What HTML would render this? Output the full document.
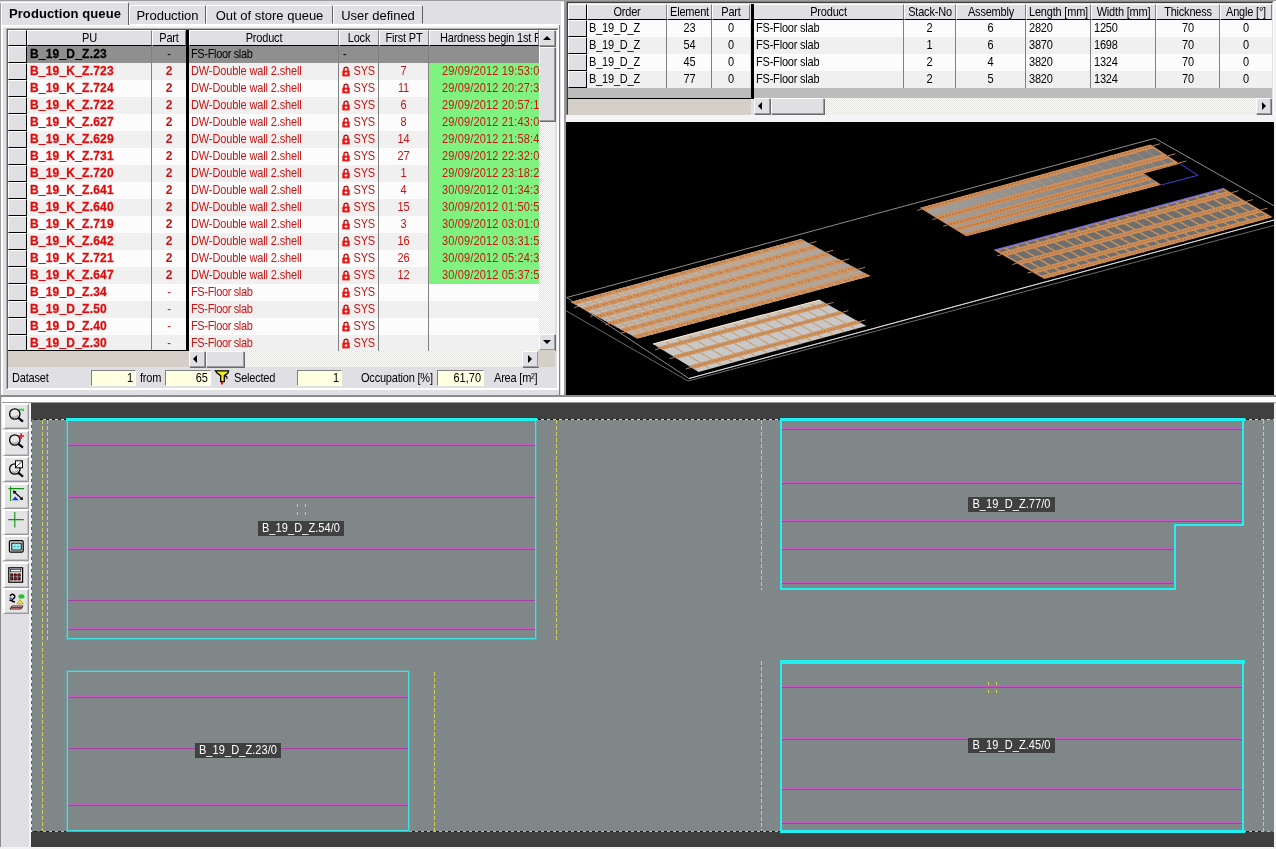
<!DOCTYPE html>
<html><head><meta charset="utf-8"><title>Production queue</title><style>
*{box-sizing:border-box;margin:0;padding:0}
html,body{width:1276px;height:849px;overflow:hidden;background:#e0dfe3;}
body{will-change:transform;position:relative;font-family:"Liberation Sans", sans-serif;font-size:11px;color:#000;line-height:1}
.a{position:absolute}
.t{position:absolute;white-space:nowrap;line-height:17px;height:17px;overflow:hidden;transform:scaleY(1.12);letter-spacing:-.2px}
.s{display:inline-block;transform:scaleY(1.12);letter-spacing:-.2px}
.trk{position:absolute;background-color:#fff;background-image:conic-gradient(#fff 25%,#e2e0dc 0 50%,#fff 0 75%,#e2e0dc 0);background-size:2px 2px}
.r{color:#c81414}
.b{font-weight:bold;font-size:12px;letter-spacing:.2px;-webkit-text-stroke:.25px currentColor}
.c{text-align:center}
.b.r{color:#dc0c0c}
.hd{position:absolute;background:#e0dfe3;border-top:1px solid #fff;border-left:1px solid #fff;border-right:1px solid #808080;border-bottom:1px solid #000;text-align:center;line-height:14px;white-space:nowrap;overflow:hidden;font-size:11px}
.rh{position:absolute;background:#e0dfe3;border-top:1px solid #fff;border-left:1px solid #fff;border-right:1px solid #000;border-bottom:1px solid #000}
.btn{position:absolute;background:#e0dfe3;border:1px solid;border-color:#fff #9a9a9a #9a9a9a #fff;box-shadow:1px 1px 0 #6c6c6c}
.inp{position:absolute;background:#ffffe1;border:1px solid;border-color:#808080 #fff #fff #808080;text-align:right;line-height:14px;padding-right:2px;font-size:11px}
.tab{position:absolute;background:#e0dfe3;border:1px solid;border-color:#fff #606060 transparent #fff;border-radius:2px 2px 0 0;text-align:center;white-space:nowrap;font-size:13px}
.tb{position:absolute;background:#e4e3e6;border:solid;border-width:2px 1px 1px 3px;border-color:#fff #989898 #989898 #fff;box-shadow:inset -1px -1px 0 #c4c4c8}
.lbl{position:absolute;background:#404040;color:#fff;font-size:11px;line-height:15px;height:15px;text-align:center;white-space:nowrap}
</style></head><body>
<div class="a" style="left:0;top:0;width:1276px;height:1px;background:#9d9d9d"></div>
<div class="a" style="left:0;top:24px;width:560px;height:2px;background:#fff"></div>
<div class="a" style="left:2px;top:26px;width:557px;height:2px;background:#f2f2f4"></div>
<div class="a" style="left:0;top:3px;width:1px;height:392px;background:#a0a0a0"></div>
<div class="a" style="left:1px;top:24px;width:2px;height:371px;background:#fff"></div>
<div class="a" style="left:559px;top:25px;width:1px;height:370px;background:#808080"></div>
<div class="a" style="left:561px;top:2px;width:3px;height:393px;background:#fff"></div>
<div class="a" style="left:564px;top:1px;width:2px;height:394px;background:#9d9d9d"></div>
<div class="tab" style="left:1px;top:2px;width:128px;height:23px;line-height:21px;font-weight:bold;font-size:13px;letter-spacing:.1px;border-bottom:none;z-index:2">Production queue</div>
<div class="tab" style="left:129px;top:5px;width:77px;height:19px;line-height:20px">Production</div>
<div class="tab" style="left:206px;top:5px;width:127px;height:19px;line-height:20px">Out of store queue</div>
<div class="tab" style="left:333px;top:5px;width:90px;height:19px;line-height:20px">User defined</div>
<div class="a" style="left:6px;top:28px;width:553px;height:362px;border:1px solid;border-color:#b0b0b0 #fff #fff #b0b0b0"></div>
<div class="a" style="left:7px;top:29px;width:551px;height:360px;border:1px solid;border-color:#606060 #fff #fff #606060;background:#e0dfe3"></div>
<div class="a" style="left:8px;top:30px;width:547px;height:337px;background:#fff"></div>
<div class="rh" style="left:8px;top:30px;width:19px;height:16px"></div>
<div class="hd" style="left:27px;top:30px;width:125px;height:16px;"><span class="s">PU</span></div>
<div class="hd" style="left:152px;top:30px;width:34px;height:16px;"><span class="s">Part</span></div>
<div class="hd" style="left:189px;top:30px;width:150px;height:16px;"><span class="s">Product</span></div>
<div class="hd" style="left:339px;top:30px;width:40px;height:16px;"><span class="s">Lock</span></div>
<div class="hd" style="left:379px;top:30px;width:50px;height:16px;"><span class="s">First PT</span></div>
<div class="hd" style="left:429px;top:30px;width:110px;height:16px;text-align:left;padding-left:10px;"><span class="s">Hardness begin 1st F</span></div>
<div class="a" style="left:186px;top:30px;width:3px;height:321px;background:#000"></div>
<div class="rh" style="left:8px;top:46px;width:19px;height:17px"></div>
<div class="a" style="left:27px;top:46px;width:159px;height:17px;background:#8f8f8f"></div>
<div class="a" style="left:189px;top:46px;width:350px;height:17px;background:#8f8f8f"></div>
<div class="t b " style="left:30px;top:46px;width:121px">B_19_D_Z.23</div>
<div class="t c " style="left:152px;top:46px;width:34px;">-</div>
<div class="t " style="left:191px;top:46px;width:146px;letter-spacing:-.35px">FS-Floor slab</div>
<div class="t " style="left:343px;top:46px;width:30px">-</div>
<div class="rh" style="left:8px;top:63px;width:19px;height:17px"></div>
<div class="a" style="left:27px;top:63px;width:159px;height:17px;background:#f0f0f0"></div>
<div class="a" style="left:189px;top:63px;width:350px;height:17px;background:#f0f0f0"></div>
<div class="a" style="left:429px;top:63px;width:110px;height:17px;background:#7ff27f"></div>
<div class="t b r" style="left:30px;top:63px;width:121px">B_19_K_Z.723</div>
<div class="t c r" style="left:152px;top:63px;width:34px;font-weight:bold;font-size:12px">2</div>
<div class="t r" style="left:191px;top:63px;width:146px;letter-spacing:-.13px">DW-Double wall 2.shell</div>
<div class="t r" style="left:339px;top:63px;width:39px;padding-left:14.5px"><svg class="a" style="left:3px;top:3px;transform:scaleY(.893)" width="8" height="11" viewBox="0 0 8 11"><path d="M2 5V3.2a2 2 0 0 1 4 0V5" fill="none" stroke="#c01010" stroke-width="1.4"/><rect x="0.3" y="4.6" width="7.4" height="5.8" fill="#f01414"/><path d="M4 6v3M2.6 7.5h2.8" stroke="#fff" stroke-width="1"/></svg>SYS</div>
<div class="t c r" style="left:379px;top:63px;width:49px">7</div>
<div class="t r" style="left:442px;top:63px;width:97px;letter-spacing:.15px">29/09/2012 19:53:0</div>
<div class="rh" style="left:8px;top:80px;width:19px;height:17px"></div>
<div class="a" style="left:27px;top:80px;width:159px;height:17px;background:#fcfcfc"></div>
<div class="a" style="left:189px;top:80px;width:350px;height:17px;background:#fcfcfc"></div>
<div class="a" style="left:429px;top:80px;width:110px;height:17px;background:#7ff27f"></div>
<div class="t b r" style="left:30px;top:80px;width:121px">B_19_K_Z.724</div>
<div class="t c r" style="left:152px;top:80px;width:34px;font-weight:bold;font-size:12px">2</div>
<div class="t r" style="left:191px;top:80px;width:146px;letter-spacing:-.13px">DW-Double wall 2.shell</div>
<div class="t r" style="left:339px;top:80px;width:39px;padding-left:14.5px"><svg class="a" style="left:3px;top:3px;transform:scaleY(.893)" width="8" height="11" viewBox="0 0 8 11"><path d="M2 5V3.2a2 2 0 0 1 4 0V5" fill="none" stroke="#c01010" stroke-width="1.4"/><rect x="0.3" y="4.6" width="7.4" height="5.8" fill="#f01414"/><path d="M4 6v3M2.6 7.5h2.8" stroke="#fff" stroke-width="1"/></svg>SYS</div>
<div class="t c r" style="left:379px;top:80px;width:49px">11</div>
<div class="t r" style="left:442px;top:80px;width:97px;letter-spacing:.15px">29/09/2012 20:27:3</div>
<div class="rh" style="left:8px;top:97px;width:19px;height:17px"></div>
<div class="a" style="left:27px;top:97px;width:159px;height:17px;background:#f0f0f0"></div>
<div class="a" style="left:189px;top:97px;width:350px;height:17px;background:#f0f0f0"></div>
<div class="a" style="left:429px;top:97px;width:110px;height:17px;background:#7ff27f"></div>
<div class="t b r" style="left:30px;top:97px;width:121px">B_19_K_Z.722</div>
<div class="t c r" style="left:152px;top:97px;width:34px;font-weight:bold;font-size:12px">2</div>
<div class="t r" style="left:191px;top:97px;width:146px;letter-spacing:-.13px">DW-Double wall 2.shell</div>
<div class="t r" style="left:339px;top:97px;width:39px;padding-left:14.5px"><svg class="a" style="left:3px;top:3px;transform:scaleY(.893)" width="8" height="11" viewBox="0 0 8 11"><path d="M2 5V3.2a2 2 0 0 1 4 0V5" fill="none" stroke="#c01010" stroke-width="1.4"/><rect x="0.3" y="4.6" width="7.4" height="5.8" fill="#f01414"/><path d="M4 6v3M2.6 7.5h2.8" stroke="#fff" stroke-width="1"/></svg>SYS</div>
<div class="t c r" style="left:379px;top:97px;width:49px">6</div>
<div class="t r" style="left:442px;top:97px;width:97px;letter-spacing:.15px">29/09/2012 20:57:1</div>
<div class="rh" style="left:8px;top:114px;width:19px;height:17px"></div>
<div class="a" style="left:27px;top:114px;width:159px;height:17px;background:#fcfcfc"></div>
<div class="a" style="left:189px;top:114px;width:350px;height:17px;background:#fcfcfc"></div>
<div class="a" style="left:429px;top:114px;width:110px;height:17px;background:#7ff27f"></div>
<div class="t b r" style="left:30px;top:114px;width:121px">B_19_K_Z.627</div>
<div class="t c r" style="left:152px;top:114px;width:34px;font-weight:bold;font-size:12px">2</div>
<div class="t r" style="left:191px;top:114px;width:146px;letter-spacing:-.13px">DW-Double wall 2.shell</div>
<div class="t r" style="left:339px;top:114px;width:39px;padding-left:14.5px"><svg class="a" style="left:3px;top:3px;transform:scaleY(.893)" width="8" height="11" viewBox="0 0 8 11"><path d="M2 5V3.2a2 2 0 0 1 4 0V5" fill="none" stroke="#c01010" stroke-width="1.4"/><rect x="0.3" y="4.6" width="7.4" height="5.8" fill="#f01414"/><path d="M4 6v3M2.6 7.5h2.8" stroke="#fff" stroke-width="1"/></svg>SYS</div>
<div class="t c r" style="left:379px;top:114px;width:49px">8</div>
<div class="t r" style="left:442px;top:114px;width:97px;letter-spacing:.15px">29/09/2012 21:43:0</div>
<div class="rh" style="left:8px;top:131px;width:19px;height:17px"></div>
<div class="a" style="left:27px;top:131px;width:159px;height:17px;background:#f0f0f0"></div>
<div class="a" style="left:189px;top:131px;width:350px;height:17px;background:#f0f0f0"></div>
<div class="a" style="left:429px;top:131px;width:110px;height:17px;background:#7ff27f"></div>
<div class="t b r" style="left:30px;top:131px;width:121px">B_19_K_Z.629</div>
<div class="t c r" style="left:152px;top:131px;width:34px;font-weight:bold;font-size:12px">2</div>
<div class="t r" style="left:191px;top:131px;width:146px;letter-spacing:-.13px">DW-Double wall 2.shell</div>
<div class="t r" style="left:339px;top:131px;width:39px;padding-left:14.5px"><svg class="a" style="left:3px;top:3px;transform:scaleY(.893)" width="8" height="11" viewBox="0 0 8 11"><path d="M2 5V3.2a2 2 0 0 1 4 0V5" fill="none" stroke="#c01010" stroke-width="1.4"/><rect x="0.3" y="4.6" width="7.4" height="5.8" fill="#f01414"/><path d="M4 6v3M2.6 7.5h2.8" stroke="#fff" stroke-width="1"/></svg>SYS</div>
<div class="t c r" style="left:379px;top:131px;width:49px">14</div>
<div class="t r" style="left:442px;top:131px;width:97px;letter-spacing:.15px">29/09/2012 21:58:4</div>
<div class="rh" style="left:8px;top:148px;width:19px;height:17px"></div>
<div class="a" style="left:27px;top:148px;width:159px;height:17px;background:#fcfcfc"></div>
<div class="a" style="left:189px;top:148px;width:350px;height:17px;background:#fcfcfc"></div>
<div class="a" style="left:429px;top:148px;width:110px;height:17px;background:#7ff27f"></div>
<div class="t b r" style="left:30px;top:148px;width:121px">B_19_K_Z.731</div>
<div class="t c r" style="left:152px;top:148px;width:34px;font-weight:bold;font-size:12px">2</div>
<div class="t r" style="left:191px;top:148px;width:146px;letter-spacing:-.13px">DW-Double wall 2.shell</div>
<div class="t r" style="left:339px;top:148px;width:39px;padding-left:14.5px"><svg class="a" style="left:3px;top:3px;transform:scaleY(.893)" width="8" height="11" viewBox="0 0 8 11"><path d="M2 5V3.2a2 2 0 0 1 4 0V5" fill="none" stroke="#c01010" stroke-width="1.4"/><rect x="0.3" y="4.6" width="7.4" height="5.8" fill="#f01414"/><path d="M4 6v3M2.6 7.5h2.8" stroke="#fff" stroke-width="1"/></svg>SYS</div>
<div class="t c r" style="left:379px;top:148px;width:49px">27</div>
<div class="t r" style="left:442px;top:148px;width:97px;letter-spacing:.15px">29/09/2012 22:32:0</div>
<div class="rh" style="left:8px;top:165px;width:19px;height:17px"></div>
<div class="a" style="left:27px;top:165px;width:159px;height:17px;background:#f0f0f0"></div>
<div class="a" style="left:189px;top:165px;width:350px;height:17px;background:#f0f0f0"></div>
<div class="a" style="left:429px;top:165px;width:110px;height:17px;background:#7ff27f"></div>
<div class="t b r" style="left:30px;top:165px;width:121px">B_19_K_Z.720</div>
<div class="t c r" style="left:152px;top:165px;width:34px;font-weight:bold;font-size:12px">2</div>
<div class="t r" style="left:191px;top:165px;width:146px;letter-spacing:-.13px">DW-Double wall 2.shell</div>
<div class="t r" style="left:339px;top:165px;width:39px;padding-left:14.5px"><svg class="a" style="left:3px;top:3px;transform:scaleY(.893)" width="8" height="11" viewBox="0 0 8 11"><path d="M2 5V3.2a2 2 0 0 1 4 0V5" fill="none" stroke="#c01010" stroke-width="1.4"/><rect x="0.3" y="4.6" width="7.4" height="5.8" fill="#f01414"/><path d="M4 6v3M2.6 7.5h2.8" stroke="#fff" stroke-width="1"/></svg>SYS</div>
<div class="t c r" style="left:379px;top:165px;width:49px">1</div>
<div class="t r" style="left:442px;top:165px;width:97px;letter-spacing:.15px">29/09/2012 23:18:2</div>
<div class="rh" style="left:8px;top:182px;width:19px;height:17px"></div>
<div class="a" style="left:27px;top:182px;width:159px;height:17px;background:#fcfcfc"></div>
<div class="a" style="left:189px;top:182px;width:350px;height:17px;background:#fcfcfc"></div>
<div class="a" style="left:429px;top:182px;width:110px;height:17px;background:#7ff27f"></div>
<div class="t b r" style="left:30px;top:182px;width:121px">B_19_K_Z.641</div>
<div class="t c r" style="left:152px;top:182px;width:34px;font-weight:bold;font-size:12px">2</div>
<div class="t r" style="left:191px;top:182px;width:146px;letter-spacing:-.13px">DW-Double wall 2.shell</div>
<div class="t r" style="left:339px;top:182px;width:39px;padding-left:14.5px"><svg class="a" style="left:3px;top:3px;transform:scaleY(.893)" width="8" height="11" viewBox="0 0 8 11"><path d="M2 5V3.2a2 2 0 0 1 4 0V5" fill="none" stroke="#c01010" stroke-width="1.4"/><rect x="0.3" y="4.6" width="7.4" height="5.8" fill="#f01414"/><path d="M4 6v3M2.6 7.5h2.8" stroke="#fff" stroke-width="1"/></svg>SYS</div>
<div class="t c r" style="left:379px;top:182px;width:49px">4</div>
<div class="t r" style="left:442px;top:182px;width:97px;letter-spacing:.15px">30/09/2012 01:34:3</div>
<div class="rh" style="left:8px;top:199px;width:19px;height:17px"></div>
<div class="a" style="left:27px;top:199px;width:159px;height:17px;background:#f0f0f0"></div>
<div class="a" style="left:189px;top:199px;width:350px;height:17px;background:#f0f0f0"></div>
<div class="a" style="left:429px;top:199px;width:110px;height:17px;background:#7ff27f"></div>
<div class="t b r" style="left:30px;top:199px;width:121px">B_19_K_Z.640</div>
<div class="t c r" style="left:152px;top:199px;width:34px;font-weight:bold;font-size:12px">2</div>
<div class="t r" style="left:191px;top:199px;width:146px;letter-spacing:-.13px">DW-Double wall 2.shell</div>
<div class="t r" style="left:339px;top:199px;width:39px;padding-left:14.5px"><svg class="a" style="left:3px;top:3px;transform:scaleY(.893)" width="8" height="11" viewBox="0 0 8 11"><path d="M2 5V3.2a2 2 0 0 1 4 0V5" fill="none" stroke="#c01010" stroke-width="1.4"/><rect x="0.3" y="4.6" width="7.4" height="5.8" fill="#f01414"/><path d="M4 6v3M2.6 7.5h2.8" stroke="#fff" stroke-width="1"/></svg>SYS</div>
<div class="t c r" style="left:379px;top:199px;width:49px">15</div>
<div class="t r" style="left:442px;top:199px;width:97px;letter-spacing:.15px">30/09/2012 01:50:5</div>
<div class="rh" style="left:8px;top:216px;width:19px;height:17px"></div>
<div class="a" style="left:27px;top:216px;width:159px;height:17px;background:#fcfcfc"></div>
<div class="a" style="left:189px;top:216px;width:350px;height:17px;background:#fcfcfc"></div>
<div class="a" style="left:429px;top:216px;width:110px;height:17px;background:#7ff27f"></div>
<div class="t b r" style="left:30px;top:216px;width:121px">B_19_K_Z.719</div>
<div class="t c r" style="left:152px;top:216px;width:34px;font-weight:bold;font-size:12px">2</div>
<div class="t r" style="left:191px;top:216px;width:146px;letter-spacing:-.13px">DW-Double wall 2.shell</div>
<div class="t r" style="left:339px;top:216px;width:39px;padding-left:14.5px"><svg class="a" style="left:3px;top:3px;transform:scaleY(.893)" width="8" height="11" viewBox="0 0 8 11"><path d="M2 5V3.2a2 2 0 0 1 4 0V5" fill="none" stroke="#c01010" stroke-width="1.4"/><rect x="0.3" y="4.6" width="7.4" height="5.8" fill="#f01414"/><path d="M4 6v3M2.6 7.5h2.8" stroke="#fff" stroke-width="1"/></svg>SYS</div>
<div class="t c r" style="left:379px;top:216px;width:49px">3</div>
<div class="t r" style="left:442px;top:216px;width:97px;letter-spacing:.15px">30/09/2012 03:01:0</div>
<div class="rh" style="left:8px;top:233px;width:19px;height:17px"></div>
<div class="a" style="left:27px;top:233px;width:159px;height:17px;background:#f0f0f0"></div>
<div class="a" style="left:189px;top:233px;width:350px;height:17px;background:#f0f0f0"></div>
<div class="a" style="left:429px;top:233px;width:110px;height:17px;background:#7ff27f"></div>
<div class="t b r" style="left:30px;top:233px;width:121px">B_19_K_Z.642</div>
<div class="t c r" style="left:152px;top:233px;width:34px;font-weight:bold;font-size:12px">2</div>
<div class="t r" style="left:191px;top:233px;width:146px;letter-spacing:-.13px">DW-Double wall 2.shell</div>
<div class="t r" style="left:339px;top:233px;width:39px;padding-left:14.5px"><svg class="a" style="left:3px;top:3px;transform:scaleY(.893)" width="8" height="11" viewBox="0 0 8 11"><path d="M2 5V3.2a2 2 0 0 1 4 0V5" fill="none" stroke="#c01010" stroke-width="1.4"/><rect x="0.3" y="4.6" width="7.4" height="5.8" fill="#f01414"/><path d="M4 6v3M2.6 7.5h2.8" stroke="#fff" stroke-width="1"/></svg>SYS</div>
<div class="t c r" style="left:379px;top:233px;width:49px">16</div>
<div class="t r" style="left:442px;top:233px;width:97px;letter-spacing:.15px">30/09/2012 03:31:5</div>
<div class="rh" style="left:8px;top:250px;width:19px;height:17px"></div>
<div class="a" style="left:27px;top:250px;width:159px;height:17px;background:#fcfcfc"></div>
<div class="a" style="left:189px;top:250px;width:350px;height:17px;background:#fcfcfc"></div>
<div class="a" style="left:429px;top:250px;width:110px;height:17px;background:#7ff27f"></div>
<div class="t b r" style="left:30px;top:250px;width:121px">B_19_K_Z.721</div>
<div class="t c r" style="left:152px;top:250px;width:34px;font-weight:bold;font-size:12px">2</div>
<div class="t r" style="left:191px;top:250px;width:146px;letter-spacing:-.13px">DW-Double wall 2.shell</div>
<div class="t r" style="left:339px;top:250px;width:39px;padding-left:14.5px"><svg class="a" style="left:3px;top:3px;transform:scaleY(.893)" width="8" height="11" viewBox="0 0 8 11"><path d="M2 5V3.2a2 2 0 0 1 4 0V5" fill="none" stroke="#c01010" stroke-width="1.4"/><rect x="0.3" y="4.6" width="7.4" height="5.8" fill="#f01414"/><path d="M4 6v3M2.6 7.5h2.8" stroke="#fff" stroke-width="1"/></svg>SYS</div>
<div class="t c r" style="left:379px;top:250px;width:49px">26</div>
<div class="t r" style="left:442px;top:250px;width:97px;letter-spacing:.15px">30/09/2012 05:24:3</div>
<div class="rh" style="left:8px;top:267px;width:19px;height:17px"></div>
<div class="a" style="left:27px;top:267px;width:159px;height:17px;background:#f0f0f0"></div>
<div class="a" style="left:189px;top:267px;width:350px;height:17px;background:#f0f0f0"></div>
<div class="a" style="left:429px;top:267px;width:110px;height:17px;background:#7ff27f"></div>
<div class="t b r" style="left:30px;top:267px;width:121px">B_19_K_Z.647</div>
<div class="t c r" style="left:152px;top:267px;width:34px;font-weight:bold;font-size:12px">2</div>
<div class="t r" style="left:191px;top:267px;width:146px;letter-spacing:-.13px">DW-Double wall 2.shell</div>
<div class="t r" style="left:339px;top:267px;width:39px;padding-left:14.5px"><svg class="a" style="left:3px;top:3px;transform:scaleY(.893)" width="8" height="11" viewBox="0 0 8 11"><path d="M2 5V3.2a2 2 0 0 1 4 0V5" fill="none" stroke="#c01010" stroke-width="1.4"/><rect x="0.3" y="4.6" width="7.4" height="5.8" fill="#f01414"/><path d="M4 6v3M2.6 7.5h2.8" stroke="#fff" stroke-width="1"/></svg>SYS</div>
<div class="t c r" style="left:379px;top:267px;width:49px">12</div>
<div class="t r" style="left:442px;top:267px;width:97px;letter-spacing:.15px">30/09/2012 05:37:5</div>
<div class="rh" style="left:8px;top:284px;width:19px;height:17px"></div>
<div class="a" style="left:27px;top:284px;width:159px;height:17px;background:#fcfcfc"></div>
<div class="a" style="left:189px;top:284px;width:350px;height:17px;background:#fcfcfc"></div>
<div class="t b r" style="left:30px;top:284px;width:121px">B_19_D_Z.34</div>
<div class="t c r" style="left:152px;top:284px;width:34px;">-</div>
<div class="t r" style="left:191px;top:284px;width:146px;letter-spacing:-.35px">FS-Floor slab</div>
<div class="t r" style="left:339px;top:284px;width:39px;padding-left:14.5px"><svg class="a" style="left:3px;top:3px;transform:scaleY(.893)" width="8" height="11" viewBox="0 0 8 11"><path d="M2 5V3.2a2 2 0 0 1 4 0V5" fill="none" stroke="#c01010" stroke-width="1.4"/><rect x="0.3" y="4.6" width="7.4" height="5.8" fill="#f01414"/><path d="M4 6v3M2.6 7.5h2.8" stroke="#fff" stroke-width="1"/></svg>SYS</div>
<div class="rh" style="left:8px;top:301px;width:19px;height:17px"></div>
<div class="a" style="left:27px;top:301px;width:159px;height:17px;background:#f0f0f0"></div>
<div class="a" style="left:189px;top:301px;width:350px;height:17px;background:#f0f0f0"></div>
<div class="t b r" style="left:30px;top:301px;width:121px">B_19_D_Z.50</div>
<div class="t c r" style="left:152px;top:301px;width:34px;">-</div>
<div class="t r" style="left:191px;top:301px;width:146px;letter-spacing:-.35px">FS-Floor slab</div>
<div class="t r" style="left:339px;top:301px;width:39px;padding-left:14.5px"><svg class="a" style="left:3px;top:3px;transform:scaleY(.893)" width="8" height="11" viewBox="0 0 8 11"><path d="M2 5V3.2a2 2 0 0 1 4 0V5" fill="none" stroke="#c01010" stroke-width="1.4"/><rect x="0.3" y="4.6" width="7.4" height="5.8" fill="#f01414"/><path d="M4 6v3M2.6 7.5h2.8" stroke="#fff" stroke-width="1"/></svg>SYS</div>
<div class="rh" style="left:8px;top:318px;width:19px;height:17px"></div>
<div class="a" style="left:27px;top:318px;width:159px;height:17px;background:#fcfcfc"></div>
<div class="a" style="left:189px;top:318px;width:350px;height:17px;background:#fcfcfc"></div>
<div class="t b r" style="left:30px;top:318px;width:121px">B_19_D_Z.40</div>
<div class="t c r" style="left:152px;top:318px;width:34px;">-</div>
<div class="t r" style="left:191px;top:318px;width:146px;letter-spacing:-.35px">FS-Floor slab</div>
<div class="t r" style="left:339px;top:318px;width:39px;padding-left:14.5px"><svg class="a" style="left:3px;top:3px;transform:scaleY(.893)" width="8" height="11" viewBox="0 0 8 11"><path d="M2 5V3.2a2 2 0 0 1 4 0V5" fill="none" stroke="#c01010" stroke-width="1.4"/><rect x="0.3" y="4.6" width="7.4" height="5.8" fill="#f01414"/><path d="M4 6v3M2.6 7.5h2.8" stroke="#fff" stroke-width="1"/></svg>SYS</div>
<div class="rh" style="left:8px;top:335px;width:19px;height:17px"></div>
<div class="a" style="left:27px;top:335px;width:159px;height:17px;background:#f0f0f0"></div>
<div class="a" style="left:189px;top:335px;width:350px;height:17px;background:#f0f0f0"></div>
<div class="t b r" style="left:30px;top:335px;width:121px">B_19_D_Z.30</div>
<div class="t c r" style="left:152px;top:335px;width:34px;">-</div>
<div class="t r" style="left:191px;top:335px;width:146px;letter-spacing:-.35px">FS-Floor slab</div>
<div class="t r" style="left:339px;top:335px;width:39px;padding-left:14.5px"><svg class="a" style="left:3px;top:3px;transform:scaleY(.893)" width="8" height="11" viewBox="0 0 8 11"><path d="M2 5V3.2a2 2 0 0 1 4 0V5" fill="none" stroke="#c01010" stroke-width="1.4"/><rect x="0.3" y="4.6" width="7.4" height="5.8" fill="#f01414"/><path d="M4 6v3M2.6 7.5h2.8" stroke="#fff" stroke-width="1"/></svg>SYS</div>
<div class="a" style="left:151px;top:46px;width:1px;height:305px;background:#808080"></div>
<div class="a" style="left:338px;top:46px;width:1px;height:305px;background:#808080"></div>
<div class="a" style="left:378px;top:46px;width:1px;height:305px;background:#808080"></div>
<div class="a" style="left:428px;top:46px;width:1px;height:305px;background:#808080"></div>
<div class="a" style="left:8px;top:350px;width:181px;height:1px;background:#000"></div>
<div class="a" style="left:8px;top:351px;width:181px;height:16px;background:#d4d0c8"></div>
<div class="trk" style="left:539px;top:30px;width:16px;height:321px"></div>
<div class="btn" style="left:539px;top:30px;width:16px;height:16px"></div>
<div class="a" style="left:543px;top:36px;width:0;height:0;border-left:4px solid transparent;border-right:4px solid transparent;border-bottom:4px solid #000"></div>
<div class="btn" style="left:539px;top:47px;width:16px;height:74px"></div>
<div class="btn" style="left:539px;top:334px;width:16px;height:16px"></div>
<div class="a" style="left:543px;top:340px;width:0;height:0;border-left:4px solid transparent;border-right:4px solid transparent;border-top:4px solid #000"></div>
<div class="trk" style="left:189px;top:351px;width:350px;height:16px"></div>
<div class="btn" style="left:189px;top:351px;width:16px;height:16px"></div>
<div class="a" style="left:193px;top:355px;width:0;height:0;border-top:4px solid transparent;border-bottom:4px solid transparent;border-right:4px solid #000"></div>
<div class="btn" style="left:206px;top:351px;width:38px;height:16px"></div>
<div class="btn" style="left:522px;top:351px;width:16px;height:16px"></div>
<div class="a" style="left:528px;top:355px;width:0;height:0;border-top:4px solid transparent;border-bottom:4px solid transparent;border-left:4px solid #000"></div>
<div class="a" style="left:538px;top:350px;width:17px;height:17px;background:#d4d0c8"></div>
<div class="t" style="left:12px;top:370px;">Dataset</div>
<div class="inp" style="left:91px;top:370px;width:45px;height:16px"><span class="s" style="letter-spacing:0">1</span></div>
<div class="t" style="left:140px;top:370px;">from</div>
<div class="inp" style="left:165px;top:370px;width:46px;height:16px"><span class="s" style="letter-spacing:0">65</span></div>
<svg class="a" style="left:214px;top:369px" width="16" height="17" viewBox="0 0 16 17"><path d="M1.5 1.8h13l-0.6 2.2-3.6 2.6v6h-3.6v-6l-3.6-2.6z" fill="#f4f020" stroke="#000" stroke-width="1.3"/><path d="M10.5 7.2q3.4-.6 2.2 3" fill="none" stroke="#000" stroke-width="1.1"/><rect x="7" y="13" width="2" height="2.4" fill="#e01010"/></svg>
<div class="t" style="left:234px;top:370px;">Selected</div>
<div class="inp" style="left:297px;top:370px;width:45px;height:16px"><span class="s" style="letter-spacing:0">1</span></div>
<div class="t" style="left:361px;top:370px;">Occupation [%]</div>
<div class="inp" style="left:437px;top:370px;width:47px;height:16px"><span class="s" style="letter-spacing:0">61,70</span></div>
<div class="t" style="left:494px;top:370px;">Area [m²]</div>
<div class="a" style="left:0;top:395px;width:1276px;height:2px;background:#8c8c8c"></div>
<div class="a" style="left:2px;top:397px;width:1274px;height:5px;background:#fff"></div>
<div class="a" style="left:566px;top:1px;width:708px;height:115px;border:1px solid;border-color:#808080 #fff #fff #808080"></div>
<div class="a" style="left:567px;top:2px;width:706px;height:113px;border:1px solid;border-color:#404040 #e0dfe3 #e0dfe3 #404040"></div>
<div class="rh" style="left:568px;top:4px;width:19px;height:16px"></div>
<div class="hd" style="left:587px;top:4px;width:80px;height:16px;line-height:14px"><span class="s">Order</span></div>
<div class="hd" style="left:667px;top:4px;width:45px;height:16px;line-height:14px"><span class="s">Element</span></div>
<div class="hd" style="left:712px;top:4px;width:38px;height:16px;line-height:14px"><span class="s">Part</span></div>
<div class="hd" style="left:753px;top:4px;width:151px;height:16px;line-height:14px"><span class="s">Product</span></div>
<div class="hd" style="left:904px;top:4px;width:52px;height:16px;line-height:14px"><span class="s">Stack-No</span></div>
<div class="hd" style="left:956px;top:4px;width:70px;height:16px;line-height:14px"><span class="s">Assembly</span></div>
<div class="hd" style="left:1026px;top:4px;width:65px;height:16px;line-height:14px"><span class="s">Length [mm]</span></div>
<div class="hd" style="left:1091px;top:4px;width:65px;height:16px;line-height:14px"><span class="s">Width [mm]</span></div>
<div class="hd" style="left:1156px;top:4px;width:64px;height:16px;line-height:14px"><span class="s">Thickness</span></div>
<div class="hd" style="left:1220px;top:4px;width:52px;height:16px;line-height:14px"><span class="s">Angle [°]</span></div>
<div class="a" style="left:751px;top:4px;width:3px;height:95px;background:#000"></div>
<div class="rh" style="left:568px;top:20px;width:19px;height:17px"></div>
<div class="a" style="left:587px;top:20px;width:163px;height:17px;background:#fcfcfc"></div>
<div class="a" style="left:754px;top:20px;width:518px;height:17px;background:#fcfcfc"></div>
<div class="t" style="left:589px;top:20px">B_19_D_Z</div>
<div class="t c" style="left:667px;top:20px;width:45px">23</div>
<div class="t c" style="left:712px;top:20px;width:38px">0</div>
<div class="t" style="left:756px;top:20px">FS-Floor slab</div>
<div class="t c" style="left:904px;top:20px;width:51px">2</div>
<div class="t c" style="left:955px;top:20px;width:71px">6</div>
<div class="t" style="left:1029px;top:20px">2820</div>
<div class="t" style="left:1094px;top:20px">1250</div>
<div class="t c" style="left:1156px;top:20px;width:64px">70</div>
<div class="t c" style="left:1220px;top:20px;width:52px">0</div>
<div class="rh" style="left:568px;top:37px;width:19px;height:17px"></div>
<div class="a" style="left:587px;top:37px;width:163px;height:17px;background:#f0f0f0"></div>
<div class="a" style="left:754px;top:37px;width:518px;height:17px;background:#f0f0f0"></div>
<div class="t" style="left:589px;top:37px">B_19_D_Z</div>
<div class="t c" style="left:667px;top:37px;width:45px">54</div>
<div class="t c" style="left:712px;top:37px;width:38px">0</div>
<div class="t" style="left:756px;top:37px">FS-Floor slab</div>
<div class="t c" style="left:904px;top:37px;width:51px">1</div>
<div class="t c" style="left:955px;top:37px;width:71px">6</div>
<div class="t" style="left:1029px;top:37px">3870</div>
<div class="t" style="left:1094px;top:37px">1698</div>
<div class="t c" style="left:1156px;top:37px;width:64px">70</div>
<div class="t c" style="left:1220px;top:37px;width:52px">0</div>
<div class="rh" style="left:568px;top:54px;width:19px;height:17px"></div>
<div class="a" style="left:587px;top:54px;width:163px;height:17px;background:#fcfcfc"></div>
<div class="a" style="left:754px;top:54px;width:518px;height:17px;background:#fcfcfc"></div>
<div class="t" style="left:589px;top:54px">B_19_D_Z</div>
<div class="t c" style="left:667px;top:54px;width:45px">45</div>
<div class="t c" style="left:712px;top:54px;width:38px">0</div>
<div class="t" style="left:756px;top:54px">FS-Floor slab</div>
<div class="t c" style="left:904px;top:54px;width:51px">2</div>
<div class="t c" style="left:955px;top:54px;width:71px">4</div>
<div class="t" style="left:1029px;top:54px">3820</div>
<div class="t" style="left:1094px;top:54px">1324</div>
<div class="t c" style="left:1156px;top:54px;width:64px">70</div>
<div class="t c" style="left:1220px;top:54px;width:52px">0</div>
<div class="rh" style="left:568px;top:71px;width:19px;height:17px"></div>
<div class="a" style="left:587px;top:71px;width:163px;height:17px;background:#f0f0f0"></div>
<div class="a" style="left:754px;top:71px;width:518px;height:17px;background:#f0f0f0"></div>
<div class="t" style="left:589px;top:71px">B_19_D_Z</div>
<div class="t c" style="left:667px;top:71px;width:45px">77</div>
<div class="t c" style="left:712px;top:71px;width:38px">0</div>
<div class="t" style="left:756px;top:71px">FS-Floor slab</div>
<div class="t c" style="left:904px;top:71px;width:51px">2</div>
<div class="t c" style="left:955px;top:71px;width:71px">5</div>
<div class="t" style="left:1029px;top:71px">3820</div>
<div class="t" style="left:1094px;top:71px">1324</div>
<div class="t c" style="left:1156px;top:71px;width:64px">70</div>
<div class="t c" style="left:1220px;top:71px;width:52px">0</div>
<div class="a" style="left:666px;top:20px;width:1px;height:68px;background:#808080"></div>
<div class="a" style="left:711px;top:20px;width:1px;height:68px;background:#808080"></div>
<div class="a" style="left:903px;top:20px;width:1px;height:68px;background:#808080"></div>
<div class="a" style="left:955px;top:20px;width:1px;height:68px;background:#808080"></div>
<div class="a" style="left:1025px;top:20px;width:1px;height:68px;background:#808080"></div>
<div class="a" style="left:1090px;top:20px;width:1px;height:68px;background:#808080"></div>
<div class="a" style="left:1155px;top:20px;width:1px;height:68px;background:#808080"></div>
<div class="a" style="left:1219px;top:20px;width:1px;height:68px;background:#808080"></div>
<div class="a" style="left:568px;top:88px;width:183px;height:10px;background:#bcbcbc"></div>
<div class="a" style="left:568px;top:99px;width:183px;height:16px;background:#d4d0c8"></div>
<div class="a" style="left:568px;top:98px;width:183px;height:1px;background:#000"></div>
<div class="a" style="left:754px;top:88px;width:518px;height:10px;background:#bcbcbc"></div>
<div class="trk" style="left:754px;top:98px;width:518px;height:17px"></div>
<div class="btn" style="left:754px;top:98px;width:16px;height:16px"></div>
<div class="a" style="left:758px;top:102px;width:0;height:0;border-top:4px solid transparent;border-bottom:4px solid transparent;border-right:4px solid #000"></div>
<div class="btn" style="left:771px;top:98px;width:53px;height:16px"></div>
<div class="btn" style="left:1256px;top:98px;width:15px;height:16px"></div>
<div class="a" style="left:1262px;top:102px;width:0;height:0;border-top:4px solid transparent;border-bottom:4px solid transparent;border-left:4px solid #000"></div>
<div class="a" style="left:566px;top:115px;width:710px;height:7px;background:#f4f4f6"></div>
<div class="a" style="left:566px;top:122px;width:708px;height:273px;background:#000"></div>
<div class="a" style="left:1274px;top:1px;width:2px;height:394px;background:#f4f4f6"></div>
<svg class="a" style="left:566px;top:121px" width="708" height="274" viewBox="566 121 708 274">
<defs><linearGradient id="gC" x1="0" x2="1"><stop offset="0" stop-color="#a0a0a0"/><stop offset="1" stop-color="#787878"/></linearGradient><linearGradient id="gA" x1="0" x2="1"><stop offset="0" stop-color="#c0c0c0"/><stop offset="1" stop-color="#a0a0a0"/></linearGradient></defs>
<polygon points="566.7,297.5 1154.9,138.3 1291,215.4 689,378.5" fill="none" stroke="#9c9c9c" stroke-width="0.9"/>
<polyline points="563,309 688,381 1296,219.5" fill="none" stroke="#777" stroke-width="0.9"/>
<polyline points="689,378.5 1291,215.4" fill="none" stroke="#dcdcdc" stroke-width="1"/>
<polygon points="570.7,302.0 801.0,239.0 870.4,276.0 637.3,338.6" fill="url(#gA)" />
<polygon points="570.7,302.0 801.0,239.0 806.2,241.8 575.7,304.7" fill="#d49058" />
<line x1="572.7" y1="303.1" x2="803.1" y2="240.1" stroke="#8c5c34" stroke-width="0.8" stroke-dasharray="1.2 2"/>
<polygon points="581.6,308.0 812.4,245.1 818.6,248.4 587.6,311.3" fill="#d49058" />
<line x1="584.6" y1="309.7" x2="815.5" y2="246.7" stroke="#8c5c34" stroke-width="0.8" stroke-dasharray="1.2 2"/>
<polygon points="594.3,314.9 825.5,252.1 831.8,255.4 600.2,318.2" fill="#d49058" />
<line x1="597.2" y1="316.6" x2="828.7" y2="253.7" stroke="#8c5c34" stroke-width="0.8" stroke-dasharray="1.2 2"/>
<polygon points="606.9,321.9 838.7,259.1 845.0,262.4 612.9,325.2" fill="#d49058" />
<line x1="609.9" y1="323.5" x2="841.8" y2="260.8" stroke="#8c5c34" stroke-width="0.8" stroke-dasharray="1.2 2"/>
<polygon points="619.6,328.9 851.9,266.2 858.2,269.5 625.6,332.2" fill="#d49058" />
<line x1="622.6" y1="330.5" x2="855.1" y2="267.8" stroke="#8c5c34" stroke-width="0.8" stroke-dasharray="1.2 2"/>
<polygon points="631.6,335.5 864.5,272.8 870.4,276.0 637.3,338.6" fill="#d49058" />
<line x1="634.6" y1="337.1" x2="867.6" y2="274.5" stroke="#8c5c34" stroke-width="0.8" stroke-dasharray="1.2 2"/>
<line x1="578.8" y1="299.8" x2="645.5" y2="336.4" stroke="#c9a274" stroke-width="1.1" />
<line x1="586.8" y1="297.6" x2="653.6" y2="334.2" stroke="#c9a274" stroke-width="1.1" />
<line x1="594.9" y1="295.4" x2="661.8" y2="332.0" stroke="#c9a274" stroke-width="1.1" />
<line x1="603.0" y1="293.2" x2="670.0" y2="329.8" stroke="#c9a274" stroke-width="1.1" />
<line x1="611.1" y1="290.9" x2="678.2" y2="327.6" stroke="#c9a274" stroke-width="1.1" />
<line x1="619.2" y1="288.7" x2="686.4" y2="325.4" stroke="#c9a274" stroke-width="1.1" />
<line x1="627.4" y1="286.5" x2="694.7" y2="323.2" stroke="#c9a274" stroke-width="1.1" />
<line x1="635.5" y1="284.3" x2="702.9" y2="321.0" stroke="#c9a274" stroke-width="1.1" />
<line x1="643.7" y1="282.0" x2="711.2" y2="318.8" stroke="#c9a274" stroke-width="1.1" />
<line x1="651.8" y1="279.8" x2="719.4" y2="316.5" stroke="#c9a274" stroke-width="1.1" />
<line x1="660.0" y1="277.6" x2="727.7" y2="314.3" stroke="#c9a274" stroke-width="1.1" />
<line x1="668.2" y1="275.3" x2="736.0" y2="312.1" stroke="#c9a274" stroke-width="1.1" />
<line x1="676.4" y1="273.1" x2="744.3" y2="309.9" stroke="#c9a274" stroke-width="1.1" />
<line x1="684.6" y1="270.8" x2="752.6" y2="307.6" stroke="#c9a274" stroke-width="1.1" />
<line x1="692.9" y1="268.6" x2="761.0" y2="305.4" stroke="#c9a274" stroke-width="1.1" />
<line x1="701.1" y1="266.3" x2="769.3" y2="303.2" stroke="#c9a274" stroke-width="1.1" />
<line x1="709.4" y1="264.1" x2="777.7" y2="300.9" stroke="#c9a274" stroke-width="1.1" />
<line x1="717.6" y1="261.8" x2="786.0" y2="298.7" stroke="#c9a274" stroke-width="1.1" />
<line x1="725.9" y1="259.5" x2="794.4" y2="296.4" stroke="#c9a274" stroke-width="1.1" />
<line x1="734.2" y1="257.3" x2="802.8" y2="294.2" stroke="#c9a274" stroke-width="1.1" />
<line x1="742.5" y1="255.0" x2="811.2" y2="291.9" stroke="#c9a274" stroke-width="1.1" />
<line x1="750.8" y1="252.7" x2="819.6" y2="289.6" stroke="#c9a274" stroke-width="1.1" />
<line x1="759.2" y1="250.4" x2="828.1" y2="287.4" stroke="#c9a274" stroke-width="1.1" />
<line x1="767.5" y1="248.2" x2="836.5" y2="285.1" stroke="#c9a274" stroke-width="1.1" />
<line x1="775.9" y1="245.9" x2="845.0" y2="282.8" stroke="#c9a274" stroke-width="1.1" />
<line x1="784.2" y1="243.6" x2="853.4" y2="280.6" stroke="#c9a274" stroke-width="1.1" />
<line x1="792.6" y1="241.3" x2="861.9" y2="278.3" stroke="#c9a274" stroke-width="1.1" />
<line x1="578.7" y1="306.4" x2="809.3" y2="243.4" stroke="#cfa27a" stroke-width="0.9" />
<line x1="590.6" y1="312.9" x2="821.7" y2="250.1" stroke="#cfa27a" stroke-width="0.9" />
<line x1="603.9" y1="320.2" x2="835.6" y2="257.4" stroke="#cfa27a" stroke-width="0.9" />
<line x1="616.6" y1="327.2" x2="848.8" y2="264.5" stroke="#cfa27a" stroke-width="0.9" />
<line x1="628.6" y1="333.8" x2="861.3" y2="271.2" stroke="#cfa27a" stroke-width="0.9" />
<line x1="574.1" y1="307.6" x2="578.7" y2="306.4" stroke="#b08050" stroke-width="1" />
<line x1="809.3" y1="243.4" x2="816.4" y2="241.5" stroke="#b08050" stroke-width="1" />
<line x1="590.1" y1="316.4" x2="594.6" y2="315.1" stroke="#b08050" stroke-width="1" />
<line x1="825.9" y1="252.3" x2="833.0" y2="250.3" stroke="#b08050" stroke-width="1" />
<line x1="605.4" y1="324.8" x2="609.9" y2="323.5" stroke="#b08050" stroke-width="1" />
<line x1="841.8" y1="260.8" x2="849.0" y2="258.9" stroke="#b08050" stroke-width="1" />
<line x1="620.7" y1="333.2" x2="625.3" y2="332.0" stroke="#b08050" stroke-width="1" />
<line x1="857.8" y1="269.3" x2="865.0" y2="267.4" stroke="#b08050" stroke-width="1" />
<polygon points="653.0,344.0 819.8,300.0 866.4,326.0 698.6,371.9" fill="#c8c8c8" />
<line x1="664.6" y1="341.0" x2="710.2" y2="368.7" stroke="#c9a070" stroke-width="1.2" />
<line x1="676.0" y1="337.9" x2="721.8" y2="365.6" stroke="#c9a070" stroke-width="1.2" />
<line x1="687.5" y1="334.9" x2="733.3" y2="362.4" stroke="#c9a070" stroke-width="1.2" />
<line x1="698.8" y1="331.9" x2="744.7" y2="359.3" stroke="#c9a070" stroke-width="1.2" />
<line x1="710.1" y1="328.9" x2="756.1" y2="356.2" stroke="#c9a070" stroke-width="1.2" />
<line x1="721.4" y1="326.0" x2="767.4" y2="353.1" stroke="#c9a070" stroke-width="1.2" />
<line x1="732.5" y1="323.0" x2="778.7" y2="350.0" stroke="#c9a070" stroke-width="1.2" />
<line x1="743.7" y1="320.1" x2="789.8" y2="346.9" stroke="#c9a070" stroke-width="1.2" />
<line x1="754.7" y1="317.2" x2="801.0" y2="343.9" stroke="#c9a070" stroke-width="1.2" />
<line x1="765.7" y1="314.3" x2="812.0" y2="340.9" stroke="#c9a070" stroke-width="1.2" />
<line x1="776.6" y1="311.4" x2="823.0" y2="337.9" stroke="#c9a070" stroke-width="1.2" />
<line x1="787.5" y1="308.5" x2="833.9" y2="334.9" stroke="#c9a070" stroke-width="1.2" />
<line x1="798.3" y1="305.7" x2="844.8" y2="331.9" stroke="#c9a070" stroke-width="1.2" />
<line x1="809.1" y1="302.8" x2="855.6" y2="328.9" stroke="#c9a070" stroke-width="1.2" />
<polygon points="657.7,346.9 824.6,302.7 829.7,305.5 662.7,349.9" fill="#d09460" />
<line x1="660.2" y1="348.4" x2="827.1" y2="304.1" stroke="#96683c" stroke-width="0.8" stroke-dasharray="1.2 2"/>
<polygon points="672.2,355.7 839.4,310.9 844.5,313.8 677.2,358.8" fill="#d09460" />
<line x1="674.7" y1="357.3" x2="842.0" y2="312.4" stroke="#96683c" stroke-width="0.8" stroke-dasharray="1.2 2"/>
<polygon points="688.7,365.8 856.2,320.3 861.4,323.2 693.7,368.9" fill="#d09460" />
<line x1="691.2" y1="367.4" x2="858.8" y2="321.8" stroke="#96683c" stroke-width="0.8" stroke-dasharray="1.2 2"/>
<polygon points="653.0,344.0 819.8,300.0 821.6,301.0 654.8,345.1" fill="#dcc0a4" />
<line x1="653.0" y1="344.0" x2="819.8" y2="300.0" stroke="#f0e8d8" stroke-width="1.2" />
<line x1="655.0" y1="349.8" x2="660.2" y2="348.4" stroke="#b08050" stroke-width="1" />
<line x1="827.1" y1="304.1" x2="833.5" y2="302.4" stroke="#b08050" stroke-width="1" />
<line x1="669.4" y1="358.7" x2="674.7" y2="357.3" stroke="#b08050" stroke-width="1" />
<line x1="842.0" y1="312.4" x2="848.4" y2="310.6" stroke="#b08050" stroke-width="1" />
<line x1="685.9" y1="368.8" x2="691.2" y2="367.4" stroke="#b08050" stroke-width="1" />
<line x1="858.8" y1="321.8" x2="865.3" y2="320.0" stroke="#b08050" stroke-width="1" />
<clipPath id="cC"><polygon points="919.2,207.8 1150.5,144.2 1180.1,163.7 1143.9,173.4 1161.6,184.9 966.3,236.4"/></clipPath>
<g clip-path="url(#cC)">
<polygon points="919.2,207.8 1150.5,144.2 1197.8,175.3 966.3,236.4" fill="#d08c56" />
<polygon points="926.6,210.4 1153.3,148.3 1162.4,154.3 935.6,215.9" fill="url(#gC)" />
<polygon points="941.8,219.6 1168.5,158.3 1173.7,161.7 946.9,222.7" fill="url(#gC)" />
<polygon points="952.3,226.0 1179.2,165.3 1181.7,167.0 954.9,227.6" fill="url(#gC)" />
<polygon points="960.1,230.7 1186.9,170.4 1190.7,172.9 963.8,233.0" fill="url(#gC)" />
<line x1="928.3" y1="205.3" x2="975.4" y2="234.0" stroke="#c89860" stroke-width="0.6" />
<line x1="937.4" y1="202.8" x2="984.6" y2="231.6" stroke="#c89860" stroke-width="0.6" />
<line x1="946.6" y1="200.3" x2="993.8" y2="229.2" stroke="#c89860" stroke-width="0.6" />
<line x1="955.8" y1="197.7" x2="1003.0" y2="226.7" stroke="#c89860" stroke-width="0.6" />
<line x1="965.1" y1="195.2" x2="1012.3" y2="224.3" stroke="#c89860" stroke-width="0.6" />
<line x1="974.4" y1="192.6" x2="1021.6" y2="221.8" stroke="#c89860" stroke-width="0.6" />
<line x1="983.8" y1="190.0" x2="1031.0" y2="219.3" stroke="#c89860" stroke-width="0.6" />
<line x1="993.2" y1="187.4" x2="1040.4" y2="216.8" stroke="#c89860" stroke-width="0.6" />
<line x1="1002.7" y1="184.8" x2="1049.9" y2="214.3" stroke="#c89860" stroke-width="0.6" />
<line x1="1012.2" y1="182.2" x2="1059.4" y2="211.8" stroke="#c89860" stroke-width="0.6" />
<line x1="1021.8" y1="179.6" x2="1069.0" y2="209.3" stroke="#c89860" stroke-width="0.6" />
<line x1="1031.4" y1="177.0" x2="1078.6" y2="206.8" stroke="#c89860" stroke-width="0.6" />
<line x1="1041.0" y1="174.3" x2="1088.3" y2="204.2" stroke="#c89860" stroke-width="0.6" />
<line x1="1050.7" y1="171.6" x2="1098.0" y2="201.6" stroke="#c89860" stroke-width="0.6" />
<line x1="1060.5" y1="169.0" x2="1107.7" y2="199.1" stroke="#c89860" stroke-width="0.6" />
<line x1="1070.3" y1="166.3" x2="1117.5" y2="196.5" stroke="#c89860" stroke-width="0.6" />
<line x1="1080.1" y1="163.6" x2="1127.4" y2="193.9" stroke="#c89860" stroke-width="0.6" />
<line x1="1090.0" y1="160.8" x2="1137.3" y2="191.3" stroke="#c89860" stroke-width="0.6" />
<line x1="1100.0" y1="158.1" x2="1147.3" y2="188.6" stroke="#c89860" stroke-width="0.6" />
<line x1="1110.0" y1="155.3" x2="1157.3" y2="186.0" stroke="#c89860" stroke-width="0.6" />
<line x1="1120.0" y1="152.6" x2="1167.3" y2="183.3" stroke="#c89860" stroke-width="0.6" />
<line x1="1130.1" y1="149.8" x2="1177.4" y2="180.7" stroke="#c89860" stroke-width="0.6" />
<line x1="1140.3" y1="147.0" x2="1187.6" y2="178.0" stroke="#c89860" stroke-width="0.6" />
<line x1="921.6" y1="209.2" x2="1152.9" y2="145.8" stroke="#8c5c34" stroke-width="0.9" stroke-dasharray="1.2 2"/>
<line x1="936.7" y1="218.5" x2="1168.1" y2="155.8" stroke="#8c5c34" stroke-width="0.9" stroke-dasharray="1.2 2"/>
<line x1="947.6" y1="225.0" x2="1179.0" y2="162.9" stroke="#8c5c34" stroke-width="0.9" stroke-dasharray="1.2 2"/>
<line x1="955.1" y1="229.6" x2="1186.5" y2="167.9" stroke="#8c5c34" stroke-width="0.9" stroke-dasharray="1.2 2"/>
<line x1="964.4" y1="235.3" x2="1195.9" y2="174.1" stroke="#8c5c34" stroke-width="0.9" stroke-dasharray="1.2 2"/>
</g>
<polyline points="1180.1,163.7 1197.8,175.3 1161.6,184.9" fill="none" stroke="#4040e0" stroke-width="1"/>
<line x1="917.2" y1="210.4" x2="921.6" y2="209.2" stroke="#b08050" stroke-width="1" />
<line x1="1152.9" y1="145.8" x2="1160.3" y2="143.7" stroke="#b08050" stroke-width="1" />
<line x1="932.4" y1="219.6" x2="936.7" y2="218.5" stroke="#b08050" stroke-width="1" />
<line x1="1168.1" y1="155.8" x2="1175.5" y2="153.8" stroke="#b08050" stroke-width="1" />
<line x1="943.2" y1="226.2" x2="947.6" y2="225.0" stroke="#b08050" stroke-width="1" />
<line x1="1179.0" y1="162.9" x2="1186.4" y2="161.0" stroke="#b08050" stroke-width="1" />
<polygon points="994.3,250.2 1224.1,188.4 1272.8,217.2 1044.4,279.1" fill="#d08c56" />
<polygon points="998.1,250.4 1223.3,189.9 1226.2,191.6 1001.1,252.2" fill="#6e6e6e" />
<polygon points="1007.2,255.7 1232.1,195.1 1241.4,200.6 1016.7,261.2" fill="#6e6e6e" />
<polygon points="1022.2,264.3 1246.7,203.7 1256.0,209.2 1031.7,269.8" fill="#6e6e6e" />
<polygon points="1037.2,273.0 1261.3,212.4 1265.7,214.9 1041.7,275.6" fill="#6e6e6e" />
<line x1="1004.4" y1="247.5" x2="1054.4" y2="276.4" stroke="#c89058" stroke-width="1.6" />
<line x1="1014.5" y1="244.8" x2="1064.5" y2="273.7" stroke="#c89058" stroke-width="1.6" />
<line x1="1024.6" y1="242.1" x2="1074.5" y2="270.9" stroke="#c89058" stroke-width="1.6" />
<line x1="1034.6" y1="239.4" x2="1084.5" y2="268.2" stroke="#c89058" stroke-width="1.6" />
<line x1="1044.7" y1="236.6" x2="1094.5" y2="265.5" stroke="#c89058" stroke-width="1.6" />
<line x1="1054.8" y1="233.9" x2="1104.5" y2="262.8" stroke="#c89058" stroke-width="1.6" />
<line x1="1064.8" y1="231.2" x2="1114.5" y2="260.1" stroke="#c89058" stroke-width="1.6" />
<line x1="1074.8" y1="228.5" x2="1124.4" y2="257.4" stroke="#c89058" stroke-width="1.6" />
<line x1="1084.8" y1="225.9" x2="1134.4" y2="254.7" stroke="#c89058" stroke-width="1.6" />
<line x1="1094.9" y1="223.2" x2="1144.3" y2="252.0" stroke="#c89058" stroke-width="1.6" />
<line x1="1104.9" y1="220.5" x2="1154.3" y2="249.3" stroke="#c89058" stroke-width="1.6" />
<line x1="1114.8" y1="217.8" x2="1164.2" y2="246.6" stroke="#c89058" stroke-width="1.6" />
<line x1="1124.8" y1="215.1" x2="1174.1" y2="243.9" stroke="#c89058" stroke-width="1.6" />
<line x1="1134.8" y1="212.4" x2="1184.0" y2="241.3" stroke="#c89058" stroke-width="1.6" />
<line x1="1144.8" y1="209.7" x2="1193.9" y2="238.6" stroke="#c89058" stroke-width="1.6" />
<line x1="1154.7" y1="207.1" x2="1203.8" y2="235.9" stroke="#c89058" stroke-width="1.6" />
<line x1="1164.7" y1="204.4" x2="1213.7" y2="233.2" stroke="#c89058" stroke-width="1.6" />
<line x1="1174.6" y1="201.7" x2="1223.6" y2="230.5" stroke="#c89058" stroke-width="1.6" />
<line x1="1184.5" y1="199.0" x2="1233.4" y2="227.9" stroke="#c89058" stroke-width="1.6" />
<line x1="1194.4" y1="196.4" x2="1243.3" y2="225.2" stroke="#c89058" stroke-width="1.6" />
<line x1="1204.3" y1="193.7" x2="1253.1" y2="222.5" stroke="#c89058" stroke-width="1.6" />
<line x1="1214.2" y1="191.1" x2="1263.0" y2="219.9" stroke="#c89058" stroke-width="1.6" />
<line x1="1001.8" y1="254.5" x2="1231.4" y2="192.7" stroke="#8c5c34" stroke-width="0.9" stroke-dasharray="1.2 2"/>
<line x1="1017.1" y1="263.4" x2="1246.3" y2="201.5" stroke="#8c5c34" stroke-width="0.9" stroke-dasharray="1.2 2"/>
<line x1="1032.2" y1="272.0" x2="1260.9" y2="210.2" stroke="#8c5c34" stroke-width="0.9" stroke-dasharray="1.2 2"/>
<line x1="1041.9" y1="277.7" x2="1270.4" y2="215.8" stroke="#8c5c34" stroke-width="0.9" stroke-dasharray="1.2 2"/>
<line x1="994.3" y1="250.2" x2="1224.1" y2="188.4" stroke="#6a6ae8" stroke-width="1.2" />
<line x1="997.2" y1="255.8" x2="1001.8" y2="254.5" stroke="#b08050" stroke-width="1" />
<line x1="1231.4" y1="192.7" x2="1238.2" y2="190.9" stroke="#b08050" stroke-width="1" />
<line x1="1012.3" y1="264.5" x2="1016.9" y2="263.2" stroke="#b08050" stroke-width="1" />
<line x1="1246.1" y1="201.4" x2="1252.9" y2="199.6" stroke="#b08050" stroke-width="1" />
<line x1="1027.3" y1="273.1" x2="1031.9" y2="271.9" stroke="#b08050" stroke-width="1" />
<line x1="1260.7" y1="210.0" x2="1267.4" y2="208.2" stroke="#b08050" stroke-width="1" />
</svg>
<div class="a" style="left:31px;top:403px;width:1243px;height:444px;background:#7f8788"></div>
<div class="a" style="left:31px;top:403px;width:1243px;height:16px;background:#404040"></div>
<div class="a" style="left:1274px;top:403px;width:2px;height:446px;background:#f4f4f4"></div>
<div class="a" style="left:31px;top:831px;width:1243px;height:16px;background:#404040"></div>
<div class="a" style="left:0;top:847px;width:1276px;height:2px;background:#f4f4f4"></div>
<svg class="a" style="left:0;top:400px" width="1276" height="449" viewBox="0 400 1276 449" shape-rendering="crispEdges">
<line x1="31" y1="419.5" x2="1274" y2="419.5" stroke="#201800" stroke-width="1"/>
<line x1="31" y1="419.5" x2="1274" y2="419.5" stroke="#ffd830" stroke-width="1" stroke-dasharray="3 3"/>
<line x1="31" y1="831.5" x2="1274" y2="831.5" stroke="#201800" stroke-width="1"/>
<line x1="31" y1="831.5" x2="1274" y2="831.5" stroke="#ffb030" stroke-width="1" stroke-dasharray="3 3"/>
<line x1="31" y1="419.5" x2="42" y2="419.5" stroke="#e02020" stroke-width="1" stroke-dasharray="3 3"/>
<line x1="1264" y1="419.5" x2="1274" y2="419.5" stroke="#e02020" stroke-width="1" stroke-dasharray="3 3"/>
<line x1="31" y1="831.5" x2="42" y2="831.5" stroke="#e02020" stroke-width="1" stroke-dasharray="3 3"/>
<line x1="1264" y1="831.5" x2="1274" y2="831.5" stroke="#e02020" stroke-width="1" stroke-dasharray="3 3"/>
<line x1="31.5" y1="419" x2="31.5" y2="832" stroke="#f0e0e0" stroke-width="1"/>
<line x1="31.5" y1="419" x2="31.5" y2="832" stroke="#f02020" stroke-width="1" stroke-dasharray="3 3"/>
<line x1="42.5" y1="420" x2="42.5" y2="831" stroke="#d4d24c" stroke-width="1" stroke-dasharray="4 2"/>
<line x1="47.5" y1="420" x2="47.5" y2="640" stroke="#d4d24c" stroke-width="1" stroke-dasharray="4 2"/>
<line x1="556.5" y1="420" x2="556.5" y2="640" stroke="#d4d24c" stroke-width="1" stroke-dasharray="4 2"/>
<line x1="434.5" y1="672" x2="434.5" y2="831" stroke="#d4d24c" stroke-width="1" stroke-dasharray="4 2"/>
<line x1="761.5" y1="420" x2="761.5" y2="590" stroke="#d4d24c" stroke-width="1" stroke-dasharray="4 2"/>
<line x1="761.5" y1="661" x2="761.5" y2="831" stroke="#d4d24c" stroke-width="1" stroke-dasharray="4 2"/>
<line x1="1263.5" y1="420" x2="1263.5" y2="831" stroke="#d4d24c" stroke-width="1" stroke-dasharray="4 2"/>
<rect x="66.5" y="419.5" width="470" height="220" fill="none" stroke="#5fa9aa" stroke-width="1"/>
<rect x="67.5" y="420.5" width="468" height="218" fill="none" stroke="#3ee2e2" stroke-width="1"/>
<rect x="66" y="418" width="471" height="3" fill="#20f0f0"/>
<rect x="68" y="444" width="467" height="1" fill="#c45cc4"/>
<rect x="68" y="445" width="467" height="1" fill="#a63ea6"/>
<rect x="68" y="496" width="467" height="1" fill="#c45cc4"/>
<rect x="68" y="497" width="467" height="1" fill="#a63ea6"/>
<rect x="68" y="548" width="467" height="1" fill="#c45cc4"/>
<rect x="68" y="549" width="467" height="1" fill="#a63ea6"/>
<rect x="68" y="599" width="467" height="1" fill="#c45cc4"/>
<rect x="68" y="600" width="467" height="1" fill="#a63ea6"/>
<rect x="68" y="628" width="467" height="1" fill="#c45cc4"/>
<rect x="68" y="629" width="467" height="1" fill="#a63ea6"/>
<rect x="66.5" y="670.5" width="343" height="161" fill="none" stroke="#5fa9aa" stroke-width="1"/>
<rect x="67.5" y="671.5" width="341" height="159" fill="none" stroke="#3ee2e2" stroke-width="1"/>
<rect x="68" y="696" width="340" height="1" fill="#c45cc4"/>
<rect x="68" y="697" width="340" height="1" fill="#a63ea6"/>
<rect x="68" y="747" width="340" height="1" fill="#c45cc4"/>
<rect x="68" y="748" width="340" height="1" fill="#a63ea6"/>
<rect x="68" y="804" width="340" height="1" fill="#c45cc4"/>
<rect x="68" y="805" width="340" height="1" fill="#a63ea6"/>
<rect x="782" y="428" width="460" height="1" fill="#c45cc4"/>
<rect x="782" y="429" width="460" height="1" fill="#a63ea6"/>
<rect x="782" y="482" width="460" height="1" fill="#c45cc4"/>
<rect x="782" y="483" width="460" height="1" fill="#a63ea6"/>
<rect x="782" y="520" width="460" height="1" fill="#c45cc4"/>
<rect x="782" y="521" width="460" height="1" fill="#a63ea6"/>
<rect x="782" y="548" width="392" height="1" fill="#c45cc4"/>
<rect x="782" y="549" width="392" height="1" fill="#a63ea6"/>
<rect x="782" y="582" width="392" height="1" fill="#c45cc4"/>
<rect x="782" y="583" width="392" height="1" fill="#a63ea6"/>
<path d="M781 420V589H1175V525H1243V420" fill="none" stroke="#20f0f0" stroke-width="2"/>
<rect x="780" y="418" width="465" height="3" fill="#20f0f0"/>
<rect x="782" y="686" width="460" height="1" fill="#c45cc4"/>
<rect x="782" y="687" width="460" height="1" fill="#a63ea6"/>
<rect x="782" y="738" width="460" height="1" fill="#c45cc4"/>
<rect x="782" y="739" width="460" height="1" fill="#a63ea6"/>
<rect x="782" y="788" width="460" height="1" fill="#c45cc4"/>
<rect x="782" y="789" width="460" height="1" fill="#a63ea6"/>
<rect x="782" y="822" width="460" height="1" fill="#c45cc4"/>
<rect x="782" y="823" width="460" height="1" fill="#a63ea6"/>
<path d="M781 662V831H1243V662" fill="none" stroke="#20f0f0" stroke-width="2"/>
<rect x="780" y="660" width="465" height="4" fill="#20f0f0"/>
<rect x="780" y="830" width="465" height="3" fill="#20f0f0"/>
<line x1="297.5" y1="504" x2="297.5" y2="515" stroke="#d4d24c" stroke-dasharray="3 5"/>
<line x1="305.5" y1="504" x2="305.5" y2="515" stroke="#d4d24c" stroke-dasharray="3 5"/>
<line x1="988.5" y1="682" x2="988.5" y2="693" stroke="#d4d24c" stroke-dasharray="3 5"/>
<line x1="996.5" y1="682" x2="996.5" y2="693" stroke="#d4d24c" stroke-dasharray="3 5"/>
</svg>
<div class="lbl" style="left:258px;top:521px;width:86px"><span class="s" style="letter-spacing:.08px">B_19_D_Z.54/0</span></div>
<div class="lbl" style="left:195px;top:743px;width:86px"><span class="s" style="letter-spacing:.08px">B_19_D_Z.23/0</span></div>
<div class="lbl" style="left:968px;top:497px;width:87px"><span class="s" style="letter-spacing:.08px">B_19_D_Z.77/0</span></div>
<div class="lbl" style="left:968px;top:738px;width:87px"><span class="s" style="letter-spacing:.08px">B_19_D_Z.45/0</span></div>
<div class="a" style="left:0;top:396px;width:1px;height:451px;background:#8c8c8c"></div>
<div class="a" style="left:2px;top:402px;width:1274px;height:1px;background:#9a9a9a"></div>
<div class="a" style="left:29px;top:403px;width:2px;height:444px;background:#f2f2f4"></div>
<div class="tb" style="left:2px;top:403px;width:27px;height:26px"></div>
<div class="tb" style="left:2px;top:430px;width:27px;height:26px"></div>
<div class="tb" style="left:2px;top:456px;width:27px;height:26px"></div>
<div class="tb" style="left:2px;top:483px;width:27px;height:26px"></div>
<div class="tb" style="left:2px;top:509px;width:27px;height:26px"></div>
<div class="tb" style="left:2px;top:535px;width:27px;height:26px"></div>
<div class="tb" style="left:2px;top:562px;width:27px;height:26px"></div>
<div class="tb" style="left:2px;top:588px;width:27px;height:26px"></div>
<svg class="a" style="left:0;top:400px" width="31" height="220" viewBox="0 400 31 220">
<circle cx="14.8" cy="414" r="5.2" fill="#e8e8e8" stroke="#000" stroke-width="1.3"/>
<path d="M12 416.5A4 4 0 0 0 18 415" fill="none" stroke="#a0a0a0" stroke-width="1.2"/>
<line x1="18.4" y1="417.8" x2="23" y2="421.6" stroke="#000" stroke-width="2.2"/>
<path d="M18.2 408.8h5.8v2.6l-1.8-1h-3z" fill="#28d040"/>
<circle cx="14.8" cy="440" r="5.2" fill="#e8e8e8" stroke="#000" stroke-width="1.3"/>
<path d="M12 442.5A4 4 0 0 0 18 441" fill="none" stroke="#a0a0a0" stroke-width="1.2"/>
<line x1="18.4" y1="443.8" x2="23" y2="447.6" stroke="#000" stroke-width="2.2"/>
<path d="M18.5 436H24M21.2 433.2V438.8" fill="none" stroke="#f01020" stroke-width="1.6"/>
<circle cx="14.8" cy="469" r="5.2" fill="#e8e8e8" stroke="#000" stroke-width="1.3"/>
<path d="M12 471.5A4 4 0 0 0 18 470" fill="none" stroke="#a0a0a0" stroke-width="1.2"/>
<line x1="18.4" y1="472.8" x2="23" y2="476.6" stroke="#000" stroke-width="2.2"/>
<rect x="15.5" y="460.8" width="7" height="7" fill="#fff" stroke="#000" stroke-width="1"/>
<line x1="16" y1="467" x2="22" y2="461.5" stroke="#000" stroke-width="0.8"/>
<path d="M10.6 486.5V501M8.5 488.6H24" fill="none" stroke="#109010" stroke-width="1.1"/>
<path d="M13.5 491.2L22.4 499.4" stroke="#000" stroke-width="1.2"/>
<path d="M13 490.6l3.6 0.6-3 3zM23 500l-3.6-0.6 3-3z" fill="#000"/>
<path d="M12 500.3L15.2 496.6L18.6 500.3z" fill="#1030f0"/>
<path d="M14.8 512V527.6M8.2 519.6H23.8" fill="none" stroke="#109010" stroke-width="1.1"/>
<rect x="9.4" y="540.6" width="13.8" height="11.6" rx="1.5" fill="#d8d8d8" stroke="#000" stroke-width="1.2"/>
<rect x="11.8" y="543.2" width="9.4" height="6.8" fill="#a8f4f4" stroke="#000" stroke-width="0.9"/>
<path d="M12 546.6H21M15 543.5V550M18 543.5V550" stroke="#50b0c0" stroke-width="0.6"/>
<rect x="8.8" y="567.8" width="13.8" height="14.4" fill="#e8e8e8" stroke="#000" stroke-width="1.2"/>
<rect x="10.6" y="569.6" width="10.2" height="2.2" fill="#fff" stroke="#000" stroke-width="0.6"/>
<rect x="10.4" y="573.8" width="2.6" height="2.6" fill="#801010" stroke="#000" stroke-width="0.5"/>
<rect x="14.100000000000001" y="573.8" width="2.6" height="2.6" fill="#801010" stroke="#000" stroke-width="0.5"/>
<rect x="17.8" y="573.8" width="2.6" height="2.6" fill="#801010" stroke="#000" stroke-width="0.5"/>
<rect x="10.4" y="577.5" width="2.6" height="2.6" fill="#801010" stroke="#000" stroke-width="0.5"/>
<rect x="14.100000000000001" y="577.5" width="2.6" height="2.6" fill="#801010" stroke="#000" stroke-width="0.5"/>
<rect x="17.8" y="577.5" width="2.6" height="2.6" fill="#801010" stroke="#000" stroke-width="0.5"/>
<path d="M10 596q2-3 4-1t-1 4t2 3M9.5 600l3 1" fill="none" stroke="#000" stroke-width="1.5"/>
<path d="M9.6 597.5l2 1.5" stroke="#2040e0" stroke-width="1.3"/>
<ellipse cx="21.4" cy="596.4" rx="3" ry="2.2" fill="#20c030"/>
<path d="M17 604L20 599.5L23.6 604z" fill="#f0e020" stroke="#806000" stroke-width="0.4"/>
<path d="M12 606H23L21 609H10z" fill="#fff" stroke="#000" stroke-width="0.8"/>
<path d="M11 607.6H22" stroke="#d01010" stroke-width="1.5"/>
</svg>
</body></html>
